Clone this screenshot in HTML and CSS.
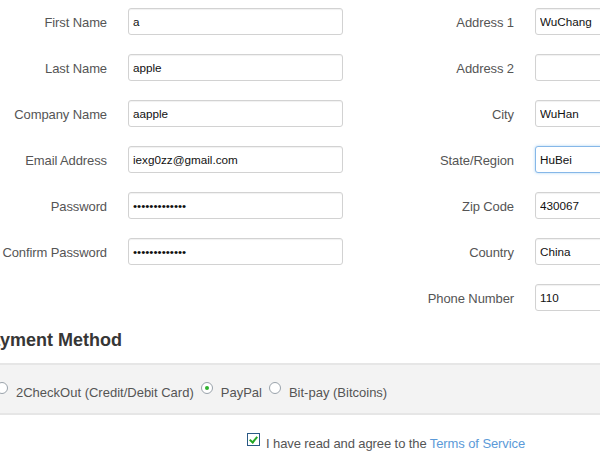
FILE: index.html
```html
<!DOCTYPE html>
<html>
<head>
<meta charset="utf-8">
<link rel="stylesheet" href="styles.css">
</head>
<body>
<div class="page">
  <form class="fields">
    <label class="lbl c1 r1">First Name</label><input class="inp c2 r1" type="text" value="a">
    <label class="lbl c3 r1">Address 1</label><input class="inp c4 r1" type="text" value="WuChang">

    <label class="lbl c1 r2">Last Name</label><input class="inp c2 r2" type="text" value="apple">
    <label class="lbl c3 r2">Address 2</label><input class="inp c4 r2" type="text" value="">

    <label class="lbl c1 r3">Company Name</label><input class="inp c2 r3" type="text" value="aapple">
    <label class="lbl c3 r3">City</label><input class="inp c4 r3" type="text" value="WuHan">

    <label class="lbl c1 r4">Email Address</label><input class="inp c2 r4" type="text" value="iexg0zz@gmail.com">
    <label class="lbl c3 r4">State/Region</label><input class="inp c4 r4 focus" type="text" value="HuBei">

    <label class="lbl c1 r5">Password</label><input class="inp c2 r5" type="password" value="abcdefghijklm">
    <label class="lbl c3 r5">Zip Code</label><input class="inp c4 r5" type="text" value="430067">

    <label class="lbl c1 r6">Confirm Password</label><input class="inp c2 r6" type="password" value="abcdefghijklm">
    <label class="lbl c3 r6">Country</label><input class="inp c4 r6" type="text" value="China">

    <label class="lbl c3 r7">Phone Number</label><input class="inp c4 r7" type="text" value="110">
  </form>

  <h2 class="heading">Payment Method</h2>

  <div class="band">
    <label class="opt"><input class="radio" type="radio" name="pm"><span>2CheckOut (Credit/Debit Card)</span></label>
    <label class="opt"><input class="radio" type="radio" name="pm" checked><span>PayPal</span></label>
    <label class="opt"><input class="radio" type="radio" name="pm"><span>Bit-pay (Bitcoins)</span></label>
  </div>

  <div class="agree">
    <input class="check" type="checkbox" checked>
    <span>I have read and agree to the <a class="tos" href="#">Terms of Service</a></span>
  </div>
</div>
</body>
</html>
```

FILE: styles.css
```css
html, body {
  margin: 0;
  padding: 0;
  background: #fff;
  overflow: hidden;
}
body {
  width: 600px;
  height: 457px;
  font-family: "Liberation Sans", Arial, sans-serif;
  font-size: 13px;
  color: #555;
}
.page {
  margin-left: -22px;
  width: 800px;
}
.fields {
  display: grid;
  grid-template-columns: 130px 215px 152px 215px;
  grid-template-rows: repeat(7, 27px);
  column-gap: 20px;
  row-gap: 19px;
  padding-top: 8px;
  margin: 0;
}
.c1 { grid-column: 1; }
.c2 { grid-column: 2; }
.c3 { grid-column: 3; }
.c4 { grid-column: 4; }
.r1 { grid-row: 1; }
.r2 { grid-row: 2; }
.r3 { grid-row: 3; }
.r4 { grid-row: 4; }
.r5 { grid-row: 5; }
.r6 { grid-row: 6; }
.r7 { grid-row: 7; }
.lbl {
  display: flex;
  align-items: center;
  justify-content: flex-end;
  padding-right: 1px;
  color: #555;
  font-size: 13px;
  letter-spacing: -0.1px;
  white-space: nowrap;
  padding-top: 2px;
}
.inp {
  box-sizing: border-box;
  width: 215px;
  height: 27px;
  margin: 0;
  padding: 0 4px;
  border: 1px solid #d2d2d2;
  border-radius: 3px;
  box-shadow: inset 0 1px 1px rgba(0,0,0,0.06);
  font-family: "Liberation Sans", Arial, sans-serif;
  font-size: 11.7px;
  color: #111;
  background: #fff;
  outline: none;
}
.inp.focus {
  border-color: #86b7e8;
  box-shadow: 0 0 3px rgba(102,175,233,0.55);
}
.heading {
  margin: 19px 0 13px 0;
  font-size: 18px;
  line-height: 20px;
  font-weight: bold;
  color: #363636;
}
.band {
  display: flex;
  align-items: flex-start;
  gap: 7px;
  height: 48px;
  box-sizing: content-box;
  padding: 0 0 0 18px;
  background: #f3f3f3;
  border-top: 2px solid #e6e6e6;
  border-bottom: 2px solid #e6e6e6;
}
.opt {
  display: flex;
  align-items: flex-start;
  gap: 8px;
  padding-top: 20px;
  line-height: 15px;
  color: #555;
  white-space: nowrap;
}
.radio {
  appearance: none;
  -webkit-appearance: none;
  box-sizing: border-box;
  width: 12px;
  height: 12px;
  margin: -3px 0 0 0;
  border: 1px solid #9aa3ab;
  border-radius: 50%;
  background: #fff;
  display: flex;
  align-items: center;
  justify-content: center;
}
.radio:checked::after {
  content: "";
  width: 4px;
  height: 4px;
  border-radius: 50%;
  background: #2fb22f;
}
.agree {
  display: flex;
  align-items: flex-start;
  padding: 21px 0 0 269px;
  line-height: 15px;
  color: #555;
  letter-spacing: -0.1px;
}
.check {
  appearance: none;
  -webkit-appearance: none;
  box-sizing: border-box;
  position: relative;
  width: 13px;
  height: 13px;
  margin: -3px 6px 0 0;
  border: 1px solid #2a5a85;
  background: #fff;
}
.check:checked::after {
  content: "";
  position: absolute;
  left: 3px;
  top: 1px;
  width: 3px;
  height: 6px;
  border-right: 2px solid #25a825;
  border-bottom: 2px solid #25a825;
  transform: rotate(40deg);
}
.tos {
  color: #5b9ad8;
  text-decoration: none;
}
```
